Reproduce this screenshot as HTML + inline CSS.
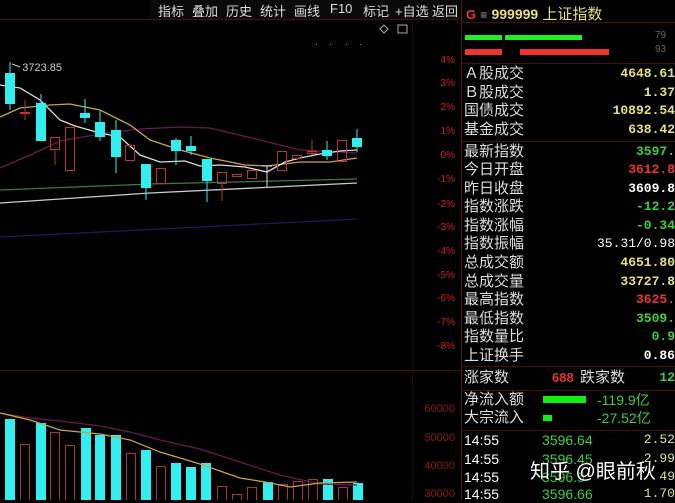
<!DOCTYPE html>
<html><head><meta charset="utf-8"><style>
body{margin:0;background:#000;width:675px;height:500px;overflow:hidden;position:relative;font-family:"Liberation Sans","Noto Sans CJK SC",sans-serif}
.a{position:absolute;white-space:nowrap}
.tb{color:#ddd;font-size:13px;top:1px}
.l{left:464px;color:#ddd;font-size:15px;line-height:18px}
.v{right:0;font-size:13px;font-weight:bold;line-height:18px;font-family:"Liberation Mono",monospace}
.y{color:#e6e07a}.g{color:#3fcf3f}.r{color:#e33}.w{color:#fff}
.p{color:#c22;font-size:10px;right:220px;text-align:right}
</style></head><body>
<div class="a" style="left:150px;top:0;width:310px;height:19px;background:#0a0a0a"></div>
<div class="a tb" style="left:158px">指标</div>
<div class="a tb" style="left:192px">叠加</div>
<div class="a tb" style="left:226px">历史</div>
<div class="a tb" style="left:260px">统计</div>
<div class="a tb" style="left:294px">画线</div>
<div class="a tb" style="left:330px">F10</div>
<div class="a tb" style="left:363px">标记</div>
<div class="a tb" style="left:395px">+自选</div>
<div class="a tb" style="left:432px">返回</div>
<svg class="a" style="left:0;top:0" width="675" height="500">
<g stroke="#4a1010" stroke-width="1" fill="none">
<line x1="0" y1="19.5" x2="461" y2="19.5"/><line x1="0" y1="370.5" x2="461" y2="370.5"/>
<line x1="412.5" y1="20" x2="412.5" y2="500" stroke="#2a0808"/>
<line x1="461.5" y1="0" x2="461.5" y2="500" stroke="#5a1515"/>
<line x1="462" y1="22.5" x2="675" y2="22.5"/><line x1="462" y1="63.5" x2="675" y2="63.5"/>
<line x1="462" y1="141.5" x2="675" y2="141.5"/><line x1="462" y1="366.5" x2="675" y2="366.5"/>
<line x1="462" y1="390.5" x2="675" y2="390.5"/><line x1="462" y1="430.5" x2="675" y2="430.5"/>
</g>
<path d="M380 29l4 -4l4 4l-4 4z" stroke="#aaa" fill="none"/><rect x="398" y="25" width="9" height="8" stroke="#aaa" fill="none"/>
<g fill="#888"><rect x="316" y="44" width="1" height="1"/><rect x="330" y="44" width="1" height="1"/><rect x="346" y="44" width="1" height="1"/><rect x="360" y="44" width="1" height="1"/></g>
<g fill="none" stroke-width="1.3">
<polyline stroke="#6a1a50" points="0,168 30,155 60,141 100,134 140,129 180,127 210,128 260,140 300,150 357,153"/>
<polyline stroke="#c9a64a" points="0,117 20,108 50,105 70,104 100,110 130,125 150,140 180,150 210,158 245,165 267,166 300,162 330,162 357,158"/>
<polyline stroke="#ddd" points="0,85 20,88 40,100 60,120 75,126 100,133 120,137 140,155 160,162 185,161 200,166 220,165 245,167 267,172 285,162 300,158 320,154 340,151 357,150"/>
<polyline stroke="#3a7a3a" points="0,190 150,184 357,179"/>
<polyline stroke="#ccc" points="0,203 150,193 357,183"/>
<polyline stroke="#1a1a5a" points="0,237 180,228 357,219"/>
</g>
<path d="M10 63v-1M12 64l8 3" stroke="#ccc"/>
<g stroke-width="1">
<g stroke="#3ee"><line x1="10" y1="63" x2="10" y2="110"/><line x1="41" y1="94" x2="41" y2="141"/><line x1="85" y1="99" x2="85" y2="123"/><line x1="100" y1="111" x2="100" y2="141"/><line x1="116" y1="120" x2="116" y2="173"/><line x1="146" y1="164" x2="146" y2="200"/><line x1="176" y1="138" x2="176" y2="165"/><line x1="191" y1="136" x2="191" y2="155"/><line x1="207" y1="159" x2="207" y2="202"/><line x1="327" y1="141" x2="327" y2="160"/><line x1="357" y1="129" x2="357" y2="152"/><line x1="267" y1="166" x2="267" y2="187" stroke="#ddd"/></g>
<g fill="#3ee"><rect x="5" y="73" width="10" height="31"/><rect x="36" y="103" width="10" height="38"/><rect x="80" y="113" width="10" height="5"/><rect x="95" y="122" width="10" height="15"/><rect x="111" y="130" width="10" height="27"/><rect x="141" y="164" width="10" height="24"/><rect x="171" y="140" width="10" height="11"/><rect x="186" y="146" width="10" height="5"/><rect x="202" y="159" width="10" height="22"/><rect x="322" y="150" width="10" height="6"/><rect x="352" y="138" width="10" height="9"/></g>
<g stroke="#b33" fill="none"><line x1="25" y1="100" x2="25" y2="120"/><rect x="20.5" y="112.5" width="9" height="1"/><line x1="55" y1="150" x2="55" y2="165"/><rect x="50.5" y="137.5" width="9" height="12"/><rect x="65.5" y="127.5" width="9" height="43"/><rect x="125.5" y="145.5" width="9" height="15"/><rect x="156.5" y="168.5" width="9" height="15"/><line x1="222" y1="184" x2="222" y2="201"/><rect x="217.5" y="172.5" width="9" height="11"/><rect x="232.5" y="174.5" width="9" height="2"/><rect x="247.5" y="170.5" width="9" height="8"/><rect x="277.5" y="151.5" width="9" height="19"/><rect x="292.5" y="155.5" width="9" height="3"/><line x1="312" y1="140" x2="312" y2="155"/><rect x="307.5" y="151.5" width="9" height="2"/><rect x="337.5" y="140.5" width="9" height="21"/></g>
<line x1="262" y1="166" x2="272" y2="166" stroke="#eee"/>
</g>
<g fill="#3ee"><rect x="5" y="419" width="10" height="81"/><rect x="36" y="423" width="10" height="77"/><rect x="81" y="428" width="10" height="72"/><rect x="95" y="435" width="10" height="65"/><rect x="111" y="435" width="10" height="65"/><rect x="141" y="450" width="10" height="50"/><rect x="171" y="463" width="10" height="37"/><rect x="186" y="467" width="10" height="33"/><rect x="201" y="463" width="10" height="37"/><rect x="263" y="482" width="10" height="18"/><rect x="323" y="479" width="10" height="21"/><rect x="353" y="483" width="10" height="17"/></g>
<g stroke="#a33" fill="none"><rect x="20.5" y="444.5" width="9" height="60"/><rect x="50.5" y="432.5" width="9" height="70"/><rect x="65.5" y="445.5" width="9" height="60"/><rect x="126.5" y="453.5" width="9" height="50"/><rect x="156.5" y="466.5" width="9" height="40"/><rect x="217.5" y="486.5" width="9" height="20"/><rect x="232.5" y="494.5" width="9" height="10"/><rect x="247.5" y="487.5" width="9" height="20"/><rect x="278.5" y="484.5" width="9" height="20"/><rect x="293.5" y="481.5" width="9" height="20"/><rect x="308.5" y="479.5" width="9" height="22"/><rect x="338.5" y="487.5" width="9" height="20"/></g>
<g fill="none" stroke-width="1.2"><polyline stroke="#6a1a50" points="0,413 30,418 60,421 100,426 130,432 160,440 200,449 240,462 280,475 320,484 357,485"/>
<polyline stroke="#c9a64a" points="0,413 30,420 60,430 100,434 130,440 160,452 200,464 240,478 265,482 290,487 320,483 357,482"/></g>
<rect x="465" y="35" width="37" height="5" fill="#2e2"/><rect x="505" y="35" width="77" height="5" fill="#2e2"/>
<rect x="465" y="49" width="37" height="6" fill="#e33"/><rect x="520" y="49" width="89" height="6" fill="#e33"/>
<rect x="543" y="396" width="43" height="7" fill="#1e1"/><rect x="543" y="415" width="9" height="6" fill="#1e1"/>
</svg>
<div class="a" style="left:10px;top:62px;color:#ccc;font-size:11px">&nbsp;&nbsp;&nbsp;&nbsp;3723.85</div>
<div class="a p" style="top:55px">4%</div><div class="a p" style="top:78px">3%</div><div class="a p" style="top:102px">2%</div><div class="a p" style="top:126px">1%</div><div class="a p" style="top:150px">0%</div><div class="a p" style="top:174px">-1%</div><div class="a p" style="top:199px">-2%</div><div class="a p" style="top:222px">-3%</div><div class="a p" style="top:246px">-4%</div><div class="a p" style="top:270px">-5%</div><div class="a p" style="top:293px">-6%</div><div class="a p" style="top:317px">-7%</div><div class="a p" style="top:341px">-8%</div>
<div class="a p" style="top:403px;font-size:11px;color:#8a1a1a">60000</div><div class="a p" style="top:432px;font-size:11px;color:#8a1a1a">50000</div><div class="a p" style="top:460px;font-size:11px;color:#8a1a1a">40000</div><div class="a p" style="top:488px;font-size:11px;color:#8a1a1a">30000</div>
<div class="a" style="left:466px;top:3px;font-size:15px"><span class="r" style="font-weight:bold;font-size:13px">G</span> <span style="color:#aaa;font-size:12px">≡</span> <b class="y" style="font-size:14px">999999</b> <span class="y">上证指数</span></div>
<div class="a" style="left:655px;top:30px;color:#666;font-size:10px">79</div><div class="a" style="left:655px;top:44px;color:#666;font-size:10px">93</div>
<div class="a l" style="top:65px">Ａ股成交</div><div class="a v y" style="top:65px">4648.61</div>
<div class="a l" style="top:84px">Ｂ股成交</div><div class="a v y" style="top:84px">1.37</div>
<div class="a l" style="top:102px">国债成交</div><div class="a v y" style="top:102px">10892.54</div>
<div class="a l" style="top:121px">基金成交</div><div class="a v y" style="top:121px">638.42</div>
<div class="a l" style="top:143px">最新指数</div><div class="a v g" style="top:143px">3597.</div>
<div class="a l" style="top:161px">今日开盘</div><div class="a v r" style="top:161px">3612.8</div>
<div class="a l" style="top:180px">昨日收盘</div><div class="a v w" style="top:180px">3609.8</div>
<div class="a l" style="top:198px">指数涨跌</div><div class="a v g" style="top:198px">-12.2</div>
<div class="a l" style="top:217px">指数涨幅</div><div class="a v g" style="top:217px">-0.34</div>
<div class="a l" style="top:235px">指数振幅</div><div class="a v w" style="top:235px;font-weight:normal">35.31/0.98</div>
<div class="a l" style="top:254px">总成交额</div><div class="a v y" style="top:254px">4651.80</div>
<div class="a l" style="top:273px">总成交量</div><div class="a v y" style="top:273px">33727.8</div>
<div class="a l" style="top:291px">最高指数</div><div class="a v r" style="top:291px">3625.</div>
<div class="a l" style="top:310px">最低指数</div><div class="a v g" style="top:310px">3509.</div>
<div class="a l" style="top:328px">指数量比</div><div class="a v g" style="top:328px">0.9</div>
<div class="a l" style="top:347px">上证换手</div><div class="a v w" style="top:347px">0.86</div>
<div class="a l" style="top:369px">涨家数</div><div class="a" style="left:552px;top:369px;font-size:13px;line-height:18px;font-weight:bold;color:#d33">688</div><div class="a" style="left:580px;top:369px;font-size:15px;line-height:18px;color:#ddd">跌家数</div><div class="a v g" style="top:369px">12</div>
<div class="a l" style="top:391px">净流入额</div><div class="a g" style="left:597px;top:391px;font-size:14px;line-height:18px">-119.9亿</div>
<div class="a l" style="top:409px">大宗流入</div><div class="a g" style="left:597px;top:409px;font-size:14px;line-height:18px">-27.52亿</div>
<div class="a l w" style="top:431px;font-size:14px">14:55</div><div class="a g" style="left:542px;top:431px;font-size:14px;line-height:18px">3596.64</div><div class="a v y" style="top:431px;font-weight:normal">2.52</div>
<div class="a l w" style="top:450px;font-size:14px">14:55</div><div class="a g" style="left:542px;top:450px;font-size:14px;line-height:18px">3596.45</div><div class="a v y" style="top:450px;font-weight:normal">2.99</div>
<div class="a l w" style="top:468px;font-size:14px">14:55</div><div class="a g" style="left:542px;top:468px;font-size:14px;line-height:18px">3596.5</div><div class="a v y" style="top:468px;font-weight:normal">49</div>
<div class="a l w" style="top:485px;font-size:14px">14:55</div><div class="a g" style="left:542px;top:485px;font-size:14px;line-height:18px">3596.66</div><div class="a v y" style="top:485px;font-weight:normal">1.70</div>
<div class="a" style="left:530px;top:455px;color:#fff;font-size:20px;text-shadow:0 0 2px #000">知乎 @眼前秋</div>
</body></html>
